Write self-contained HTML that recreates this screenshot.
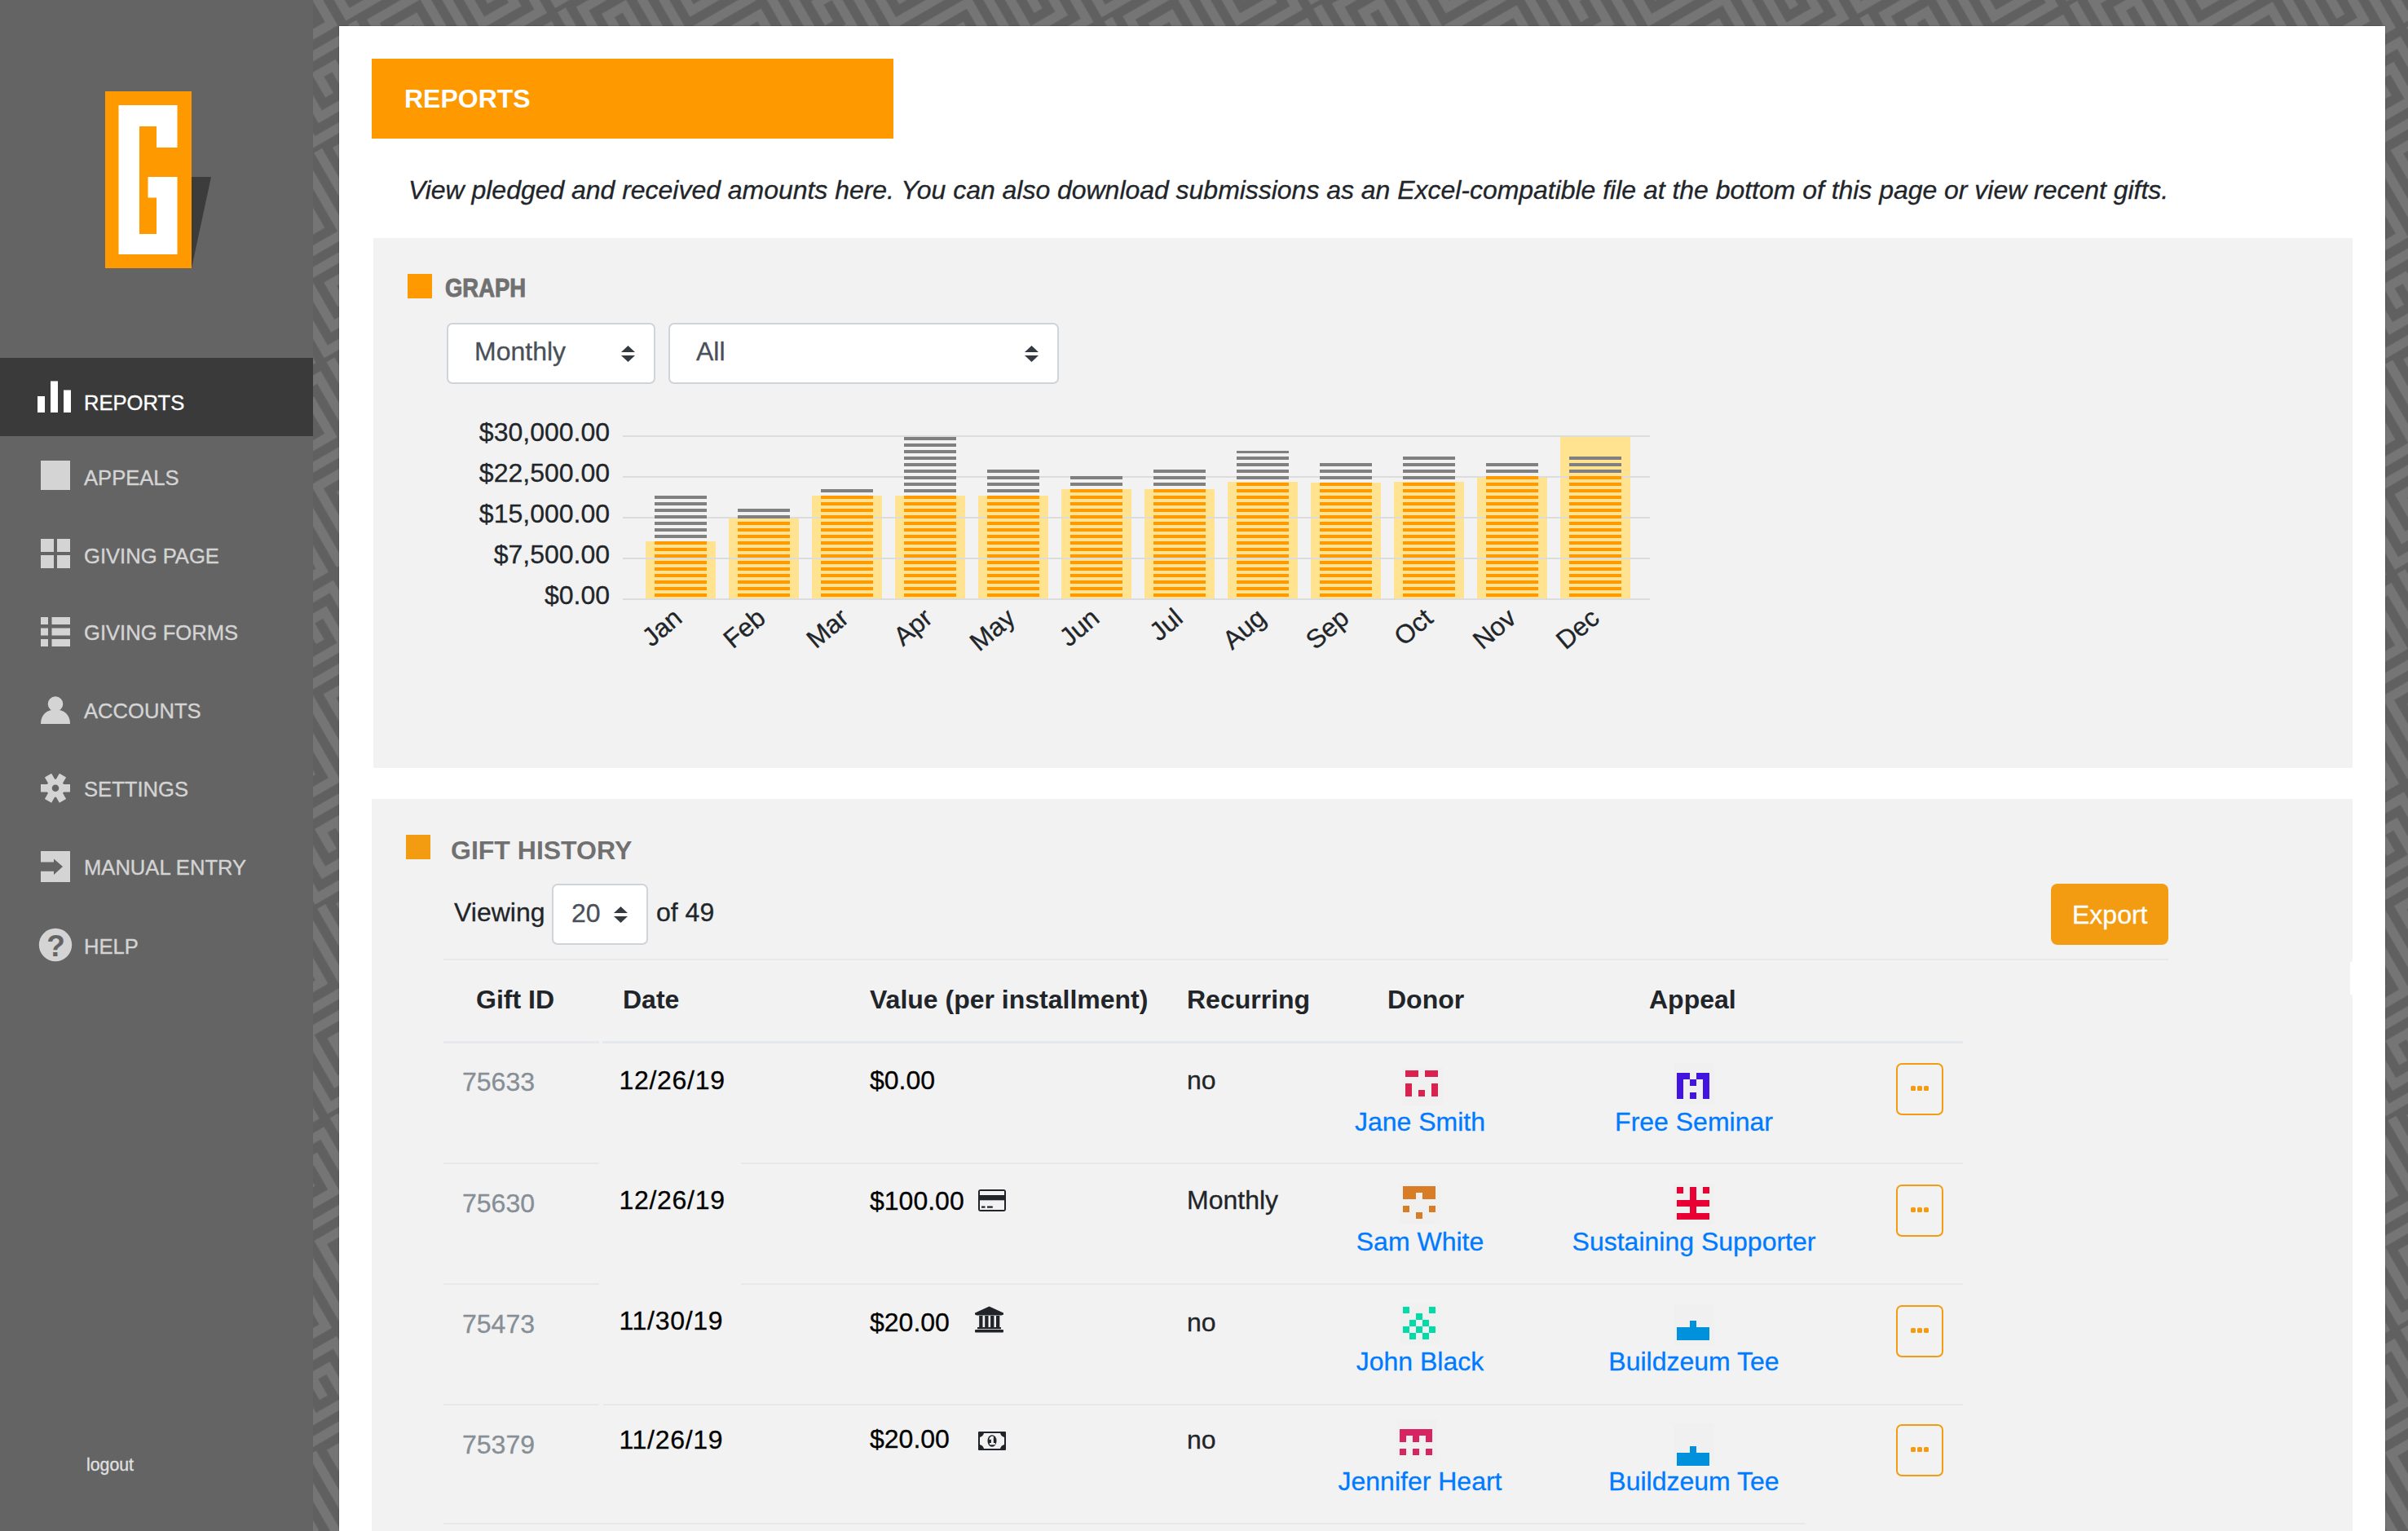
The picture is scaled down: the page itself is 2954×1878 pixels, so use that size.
<!DOCTYPE html><html><head><meta charset="utf-8"><title>Reports</title><style>
html,body{margin:0;padding:0;}
body{width:2954px;height:1878px;overflow:hidden;position:relative;font-family:"Liberation Sans", sans-serif;background:#636363;}
.t{position:absolute;white-space:nowrap;}
.r{position:absolute;}
svg{position:absolute;overflow:visible;}

</style></head><body>
<svg style="left:0;top:0" width="2954" height="1878" viewBox="0 0 2954 1878">
<defs>
<pattern id="mz" patternUnits="userSpaceOnUse" width="115" height="115" patternTransform="rotate(-30) translate(4 10)">
<rect width="115" height="115" fill="#606060"/>
<g fill="none" stroke="#757575" stroke-width="11.5" stroke-linecap="square">
<path d="M11.5 0 V103.5 H103.5 V11.5 H34.5 V80.5 H80.5 V34.5 H57.5 V57.5"/>
</g>
</pattern>
</defs>
<rect x="0" y="0" width="2954" height="1878" fill="url(#mz)"/>
</svg>
<div class="r" style="left:0px;top:0px;width:384px;height:1878px;background:#646464;"></div>
<svg style="left:0;top:0" width="384" height="400" viewBox="0 0 384 400">
<polygon points="235,217 259,217 235,329" fill="#3c3c3c"/>
<rect x="129" y="112" width="106" height="217" fill="#ff9900"/>
<rect x="145.5" y="129" width="72" height="183" fill="#ffffff"/>
<polygon points="171,155 192,155 192,181 235,181 235,217 181.5,217 181.5,242.5 192,242.5 192,287 171,287" fill="#ff9900"/>
</svg>
<div class="r" style="left:0px;top:439px;width:384px;height:96px;background:#3a3a3a;"></div>
<div class="t" style="left:103px;top:482.33px;font-size:25.6px;line-height:25.6px;color:#ffffff;font-weight:normal;font-style:normal;-webkit-text-stroke:0.35px #ffffff;">REPORTS</div>
<div class="t" style="left:103px;top:574.33px;font-size:25.6px;line-height:25.6px;color:#d4d4d4;font-weight:normal;font-style:normal;-webkit-text-stroke:0.35px #d4d4d4;">APPEALS</div>
<div class="t" style="left:103px;top:670.33px;font-size:25.6px;line-height:25.6px;color:#d4d4d4;font-weight:normal;font-style:normal;-webkit-text-stroke:0.35px #d4d4d4;">GIVING PAGE</div>
<div class="t" style="left:103px;top:764.33px;font-size:25.6px;line-height:25.6px;color:#d4d4d4;font-weight:normal;font-style:normal;-webkit-text-stroke:0.35px #d4d4d4;">GIVING FORMS</div>
<div class="t" style="left:103px;top:860.33px;font-size:25.6px;line-height:25.6px;color:#d4d4d4;font-weight:normal;font-style:normal;-webkit-text-stroke:0.35px #d4d4d4;">ACCOUNTS</div>
<div class="t" style="left:103px;top:956.33px;font-size:25.6px;line-height:25.6px;color:#d4d4d4;font-weight:normal;font-style:normal;-webkit-text-stroke:0.35px #d4d4d4;">SETTINGS</div>
<div class="t" style="left:103px;top:1052.33px;font-size:25.6px;line-height:25.6px;color:#d4d4d4;font-weight:normal;font-style:normal;-webkit-text-stroke:0.35px #d4d4d4;">MANUAL ENTRY</div>
<div class="t" style="left:103px;top:1149.33px;font-size:25.6px;line-height:25.6px;color:#d4d4d4;font-weight:normal;font-style:normal;-webkit-text-stroke:0.35px #d4d4d4;">HELP</div>
<svg style="left:0;top:0" width="384" height="1300" viewBox="0 0 384 1300">
<g fill="#ffffff">
<rect x="46" y="486" width="9" height="20"/>
<rect x="62" y="467.5" width="9" height="38.5"/>
<rect x="78" y="478.5" width="9" height="27.5"/>
</g>
<g fill="#d4d4d4">
<rect x="50" y="565" width="36" height="36"/>
<rect x="50" y="661" width="16" height="16"/><rect x="70" y="661" width="16" height="16"/>
<rect x="50" y="681" width="16" height="16"/><rect x="70" y="681" width="16" height="16"/>
<rect x="50" y="757" width="9" height="9"/><rect x="63.5" y="757" width="22.5" height="9"/>
<rect x="50" y="770.5" width="9" height="9"/><rect x="63.5" y="770.5" width="22.5" height="9"/>
<rect x="50" y="784" width="9" height="9"/><rect x="63.5" y="784" width="22.5" height="9"/>
<circle cx="68" cy="863.5" r="9.3"/>
<path d="M50 888 C50 876 58 870.5 68 870.5 C78 870.5 86 876 86 888 Z"/>
<path d="M60.5 1044 H86 V1082 H50 V1068.8 H66 V1073 L77 1063 L66 1053.4 V1057.4 H50 V1044 Z"/>
<circle cx="68" cy="1159" r="20.2"/>
</g>
<g transform="translate(68 966.8)" fill="#d4d4d4">
<circle r="11"/>
<rect x="-18" y="-4.75" width="36" height="9.5"/>
<rect x="-18" y="-4.75" width="36" height="9.5" transform="rotate(60)"/>
<rect x="-18" y="-4.75" width="36" height="9.5" transform="rotate(120)"/>
<circle r="4.3" fill="#646464"/>
</g>
<text x="68.5" y="1172.5" text-anchor="middle" font-family="Liberation Sans, sans-serif" font-weight="bold" font-size="37" fill="#646464">?</text>
</svg>
<div class="t" style="left:106px;top:1786.57px;font-size:21.3px;line-height:21.3px;color:#e0e0e0;font-weight:normal;font-style:normal;-webkit-text-stroke:0.3px #e0e0e0;">logout</div>
<div class="r" style="left:416px;top:32px;width:2510px;height:1846px;background:#ffffff;box-shadow:0 0 1.5px rgba(0,0,0,0.45);"></div>
<div class="r" style="left:456px;top:72px;width:640px;height:98px;background:#ff9900;"></div>
<div class="t" style="left:496px;top:104.91px;font-size:32px;line-height:32px;color:#ffffff;font-weight:bold;font-style:normal;">REPORTS</div>
<div class="t" style="left:501px;top:216.91px;font-size:32px;line-height:32px;color:#212529;font-weight:normal;font-style:italic;letter-spacing:-0.03px;-webkit-text-stroke:0.3px #212529;">View pledged and received amounts here. You can also download submissions as an Excel-compatible file at the bottom of this page or view recent gifts.</div>
<div class="r" style="left:458px;top:292px;width:2428px;height:650px;background:#f2f2f2;"></div>
<div class="r" style="left:500px;top:336px;width:30px;height:30px;background:#ff9900;"></div>
<div class="t" style="left:546px;top:338.18px;font-size:30.5px;line-height:30.5px;color:#707070;font-weight:bold;font-style:normal;transform:scaleX(0.9);transform-origin:0 0;-webkit-text-stroke:0.9px #707070;">GRAPH</div>
<div class="r" style="left:548px;top:396px;width:252px;height:71px;background:#fff;border:2px solid #ced4da;border-radius:7px;"></div>
<div class="t" style="left:582px;top:415.41px;font-size:32px;line-height:32px;color:#495057;font-weight:normal;font-style:normal;-webkit-text-stroke:0.3px #495057;">Monthly</div>
<svg style="left:762px;top:424px" width="17" height="20" viewBox="0 0 17 20"><path d="M8.5 0 L17 8 H0 Z M0 12 H17 L8.5 20 Z" fill="#343a40"/></svg>
<div class="r" style="left:820px;top:396px;width:475px;height:71px;background:#fff;border:2px solid #ced4da;border-radius:7px;"></div>
<div class="t" style="left:854px;top:415.41px;font-size:32px;line-height:32px;color:#495057;font-weight:normal;font-style:normal;-webkit-text-stroke:0.3px #495057;">All</div>
<svg style="left:1257px;top:424px" width="17" height="20" viewBox="0 0 17 20"><path d="M8.5 0 L17 8 H0 Z M0 12 H17 L8.5 20 Z" fill="#343a40"/></svg>
<div class="t" style="right:2206px;top:513.91px;font-size:32px;line-height:32px;color:#212529;font-weight:normal;font-style:normal;-webkit-text-stroke:0.3px #212529;">$30,000.00</div>
<div class="t" style="right:2206px;top:563.91px;font-size:32px;line-height:32px;color:#212529;font-weight:normal;font-style:normal;-webkit-text-stroke:0.3px #212529;">$22,500.00</div>
<div class="t" style="right:2206px;top:613.91px;font-size:32px;line-height:32px;color:#212529;font-weight:normal;font-style:normal;-webkit-text-stroke:0.3px #212529;">$15,000.00</div>
<div class="t" style="right:2206px;top:663.91px;font-size:32px;line-height:32px;color:#212529;font-weight:normal;font-style:normal;-webkit-text-stroke:0.3px #212529;">$7,500.00</div>
<div class="t" style="right:2206px;top:713.91px;font-size:32px;line-height:32px;color:#212529;font-weight:normal;font-style:normal;-webkit-text-stroke:0.3px #212529;">$0.00</div>
<svg style="left:0;top:0" width="2954" height="900" viewBox="0 0 2954 900">
<rect x="792" y="664" width="86" height="70" fill="#ffe391"/>
<rect x="894" y="636" width="86" height="98" fill="#ffe391"/>
<rect x="996" y="608" width="86" height="126" fill="#ffe391"/>
<rect x="1098" y="608" width="86" height="126" fill="#ffe391"/>
<rect x="1200" y="608" width="86" height="126" fill="#ffe391"/>
<rect x="1302" y="600" width="86" height="134" fill="#ffe391"/>
<rect x="1404" y="600" width="86" height="134" fill="#ffe391"/>
<rect x="1506" y="591" width="86" height="143" fill="#ffe391"/>
<rect x="1608" y="592" width="86" height="142" fill="#ffe391"/>
<rect x="1710" y="591" width="86" height="143" fill="#ffe391"/>
<rect x="1812" y="586" width="86" height="148" fill="#ffe391"/>
<rect x="1914" y="536" width="86" height="198" fill="#ffe391"/>
<rect x="764" y="534" width="1260" height="2" fill="#dcdcdc"/>
<rect x="764" y="584" width="1260" height="2" fill="#dcdcdc"/>
<rect x="764" y="634" width="1260" height="2" fill="#dcdcdc"/>
<rect x="764" y="684" width="1260" height="2" fill="#dcdcdc"/>
<rect x="764" y="734" width="1260" height="2" fill="#dcdcdc"/>
<rect x="803" y="608" width="64" height="4" fill="#808080"/>
<rect x="803" y="616" width="64" height="4" fill="#808080"/>
<rect x="803" y="624" width="64" height="4" fill="#808080"/>
<rect x="803" y="632" width="64" height="4" fill="#808080"/>
<rect x="803" y="640" width="64" height="4" fill="#808080"/>
<rect x="803" y="648" width="64" height="4" fill="#808080"/>
<rect x="803" y="656" width="64" height="4" fill="#808080"/>
<rect x="803" y="664" width="64" height="4" fill="#ff9900"/>
<rect x="803" y="672" width="64" height="4" fill="#ff9900"/>
<rect x="803" y="680" width="64" height="4" fill="#ff9900"/>
<rect x="803" y="688" width="64" height="4" fill="#ff9900"/>
<rect x="803" y="696" width="64" height="4" fill="#ff9900"/>
<rect x="803" y="704" width="64" height="4" fill="#ff9900"/>
<rect x="803" y="712" width="64" height="4" fill="#ff9900"/>
<rect x="803" y="720" width="64" height="4" fill="#ff9900"/>
<rect x="803" y="728" width="64" height="4" fill="#ff9900"/>
<rect x="905" y="624" width="64" height="4" fill="#808080"/>
<rect x="905" y="632" width="64" height="4" fill="#808080"/>
<rect x="905" y="640" width="64" height="4" fill="#ff9900"/>
<rect x="905" y="648" width="64" height="4" fill="#ff9900"/>
<rect x="905" y="656" width="64" height="4" fill="#ff9900"/>
<rect x="905" y="664" width="64" height="4" fill="#ff9900"/>
<rect x="905" y="672" width="64" height="4" fill="#ff9900"/>
<rect x="905" y="680" width="64" height="4" fill="#ff9900"/>
<rect x="905" y="688" width="64" height="4" fill="#ff9900"/>
<rect x="905" y="696" width="64" height="4" fill="#ff9900"/>
<rect x="905" y="704" width="64" height="4" fill="#ff9900"/>
<rect x="905" y="712" width="64" height="4" fill="#ff9900"/>
<rect x="905" y="720" width="64" height="4" fill="#ff9900"/>
<rect x="905" y="728" width="64" height="4" fill="#ff9900"/>
<rect x="1007" y="600" width="64" height="4" fill="#808080"/>
<rect x="1007" y="608" width="64" height="4" fill="#ff9900"/>
<rect x="1007" y="616" width="64" height="4" fill="#ff9900"/>
<rect x="1007" y="624" width="64" height="4" fill="#ff9900"/>
<rect x="1007" y="632" width="64" height="4" fill="#ff9900"/>
<rect x="1007" y="640" width="64" height="4" fill="#ff9900"/>
<rect x="1007" y="648" width="64" height="4" fill="#ff9900"/>
<rect x="1007" y="656" width="64" height="4" fill="#ff9900"/>
<rect x="1007" y="664" width="64" height="4" fill="#ff9900"/>
<rect x="1007" y="672" width="64" height="4" fill="#ff9900"/>
<rect x="1007" y="680" width="64" height="4" fill="#ff9900"/>
<rect x="1007" y="688" width="64" height="4" fill="#ff9900"/>
<rect x="1007" y="696" width="64" height="4" fill="#ff9900"/>
<rect x="1007" y="704" width="64" height="4" fill="#ff9900"/>
<rect x="1007" y="712" width="64" height="4" fill="#ff9900"/>
<rect x="1007" y="720" width="64" height="4" fill="#ff9900"/>
<rect x="1007" y="728" width="64" height="4" fill="#ff9900"/>
<rect x="1109" y="536" width="64" height="4" fill="#808080"/>
<rect x="1109" y="544" width="64" height="4" fill="#808080"/>
<rect x="1109" y="552" width="64" height="4" fill="#808080"/>
<rect x="1109" y="560" width="64" height="4" fill="#808080"/>
<rect x="1109" y="568" width="64" height="4" fill="#808080"/>
<rect x="1109" y="576" width="64" height="4" fill="#808080"/>
<rect x="1109" y="584" width="64" height="4" fill="#808080"/>
<rect x="1109" y="592" width="64" height="4" fill="#808080"/>
<rect x="1109" y="600" width="64" height="4" fill="#808080"/>
<rect x="1109" y="608" width="64" height="4" fill="#ff9900"/>
<rect x="1109" y="616" width="64" height="4" fill="#ff9900"/>
<rect x="1109" y="624" width="64" height="4" fill="#ff9900"/>
<rect x="1109" y="632" width="64" height="4" fill="#ff9900"/>
<rect x="1109" y="640" width="64" height="4" fill="#ff9900"/>
<rect x="1109" y="648" width="64" height="4" fill="#ff9900"/>
<rect x="1109" y="656" width="64" height="4" fill="#ff9900"/>
<rect x="1109" y="664" width="64" height="4" fill="#ff9900"/>
<rect x="1109" y="672" width="64" height="4" fill="#ff9900"/>
<rect x="1109" y="680" width="64" height="4" fill="#ff9900"/>
<rect x="1109" y="688" width="64" height="4" fill="#ff9900"/>
<rect x="1109" y="696" width="64" height="4" fill="#ff9900"/>
<rect x="1109" y="704" width="64" height="4" fill="#ff9900"/>
<rect x="1109" y="712" width="64" height="4" fill="#ff9900"/>
<rect x="1109" y="720" width="64" height="4" fill="#ff9900"/>
<rect x="1109" y="728" width="64" height="4" fill="#ff9900"/>
<rect x="1211" y="576" width="64" height="4" fill="#808080"/>
<rect x="1211" y="584" width="64" height="4" fill="#808080"/>
<rect x="1211" y="592" width="64" height="4" fill="#808080"/>
<rect x="1211" y="600" width="64" height="4" fill="#808080"/>
<rect x="1211" y="608" width="64" height="4" fill="#ff9900"/>
<rect x="1211" y="616" width="64" height="4" fill="#ff9900"/>
<rect x="1211" y="624" width="64" height="4" fill="#ff9900"/>
<rect x="1211" y="632" width="64" height="4" fill="#ff9900"/>
<rect x="1211" y="640" width="64" height="4" fill="#ff9900"/>
<rect x="1211" y="648" width="64" height="4" fill="#ff9900"/>
<rect x="1211" y="656" width="64" height="4" fill="#ff9900"/>
<rect x="1211" y="664" width="64" height="4" fill="#ff9900"/>
<rect x="1211" y="672" width="64" height="4" fill="#ff9900"/>
<rect x="1211" y="680" width="64" height="4" fill="#ff9900"/>
<rect x="1211" y="688" width="64" height="4" fill="#ff9900"/>
<rect x="1211" y="696" width="64" height="4" fill="#ff9900"/>
<rect x="1211" y="704" width="64" height="4" fill="#ff9900"/>
<rect x="1211" y="712" width="64" height="4" fill="#ff9900"/>
<rect x="1211" y="720" width="64" height="4" fill="#ff9900"/>
<rect x="1211" y="728" width="64" height="4" fill="#ff9900"/>
<rect x="1313" y="584" width="64" height="4" fill="#808080"/>
<rect x="1313" y="592" width="64" height="4" fill="#808080"/>
<rect x="1313" y="600" width="64" height="4" fill="#ff9900"/>
<rect x="1313" y="608" width="64" height="4" fill="#ff9900"/>
<rect x="1313" y="616" width="64" height="4" fill="#ff9900"/>
<rect x="1313" y="624" width="64" height="4" fill="#ff9900"/>
<rect x="1313" y="632" width="64" height="4" fill="#ff9900"/>
<rect x="1313" y="640" width="64" height="4" fill="#ff9900"/>
<rect x="1313" y="648" width="64" height="4" fill="#ff9900"/>
<rect x="1313" y="656" width="64" height="4" fill="#ff9900"/>
<rect x="1313" y="664" width="64" height="4" fill="#ff9900"/>
<rect x="1313" y="672" width="64" height="4" fill="#ff9900"/>
<rect x="1313" y="680" width="64" height="4" fill="#ff9900"/>
<rect x="1313" y="688" width="64" height="4" fill="#ff9900"/>
<rect x="1313" y="696" width="64" height="4" fill="#ff9900"/>
<rect x="1313" y="704" width="64" height="4" fill="#ff9900"/>
<rect x="1313" y="712" width="64" height="4" fill="#ff9900"/>
<rect x="1313" y="720" width="64" height="4" fill="#ff9900"/>
<rect x="1313" y="728" width="64" height="4" fill="#ff9900"/>
<rect x="1415" y="576" width="64" height="4" fill="#808080"/>
<rect x="1415" y="584" width="64" height="4" fill="#808080"/>
<rect x="1415" y="592" width="64" height="4" fill="#808080"/>
<rect x="1415" y="600" width="64" height="4" fill="#ff9900"/>
<rect x="1415" y="608" width="64" height="4" fill="#ff9900"/>
<rect x="1415" y="616" width="64" height="4" fill="#ff9900"/>
<rect x="1415" y="624" width="64" height="4" fill="#ff9900"/>
<rect x="1415" y="632" width="64" height="4" fill="#ff9900"/>
<rect x="1415" y="640" width="64" height="4" fill="#ff9900"/>
<rect x="1415" y="648" width="64" height="4" fill="#ff9900"/>
<rect x="1415" y="656" width="64" height="4" fill="#ff9900"/>
<rect x="1415" y="664" width="64" height="4" fill="#ff9900"/>
<rect x="1415" y="672" width="64" height="4" fill="#ff9900"/>
<rect x="1415" y="680" width="64" height="4" fill="#ff9900"/>
<rect x="1415" y="688" width="64" height="4" fill="#ff9900"/>
<rect x="1415" y="696" width="64" height="4" fill="#ff9900"/>
<rect x="1415" y="704" width="64" height="4" fill="#ff9900"/>
<rect x="1415" y="712" width="64" height="4" fill="#ff9900"/>
<rect x="1415" y="720" width="64" height="4" fill="#ff9900"/>
<rect x="1415" y="728" width="64" height="4" fill="#ff9900"/>
<rect x="1517" y="553" width="64" height="3" fill="#808080"/>
<rect x="1517" y="560" width="64" height="4" fill="#808080"/>
<rect x="1517" y="568" width="64" height="4" fill="#808080"/>
<rect x="1517" y="576" width="64" height="4" fill="#808080"/>
<rect x="1517" y="584" width="64" height="4" fill="#808080"/>
<rect x="1517" y="592" width="64" height="4" fill="#ff9900"/>
<rect x="1517" y="600" width="64" height="4" fill="#ff9900"/>
<rect x="1517" y="608" width="64" height="4" fill="#ff9900"/>
<rect x="1517" y="616" width="64" height="4" fill="#ff9900"/>
<rect x="1517" y="624" width="64" height="4" fill="#ff9900"/>
<rect x="1517" y="632" width="64" height="4" fill="#ff9900"/>
<rect x="1517" y="640" width="64" height="4" fill="#ff9900"/>
<rect x="1517" y="648" width="64" height="4" fill="#ff9900"/>
<rect x="1517" y="656" width="64" height="4" fill="#ff9900"/>
<rect x="1517" y="664" width="64" height="4" fill="#ff9900"/>
<rect x="1517" y="672" width="64" height="4" fill="#ff9900"/>
<rect x="1517" y="680" width="64" height="4" fill="#ff9900"/>
<rect x="1517" y="688" width="64" height="4" fill="#ff9900"/>
<rect x="1517" y="696" width="64" height="4" fill="#ff9900"/>
<rect x="1517" y="704" width="64" height="4" fill="#ff9900"/>
<rect x="1517" y="712" width="64" height="4" fill="#ff9900"/>
<rect x="1517" y="720" width="64" height="4" fill="#ff9900"/>
<rect x="1517" y="728" width="64" height="4" fill="#ff9900"/>
<rect x="1619" y="568" width="64" height="4" fill="#808080"/>
<rect x="1619" y="576" width="64" height="4" fill="#808080"/>
<rect x="1619" y="584" width="64" height="4" fill="#808080"/>
<rect x="1619" y="592" width="64" height="4" fill="#ff9900"/>
<rect x="1619" y="600" width="64" height="4" fill="#ff9900"/>
<rect x="1619" y="608" width="64" height="4" fill="#ff9900"/>
<rect x="1619" y="616" width="64" height="4" fill="#ff9900"/>
<rect x="1619" y="624" width="64" height="4" fill="#ff9900"/>
<rect x="1619" y="632" width="64" height="4" fill="#ff9900"/>
<rect x="1619" y="640" width="64" height="4" fill="#ff9900"/>
<rect x="1619" y="648" width="64" height="4" fill="#ff9900"/>
<rect x="1619" y="656" width="64" height="4" fill="#ff9900"/>
<rect x="1619" y="664" width="64" height="4" fill="#ff9900"/>
<rect x="1619" y="672" width="64" height="4" fill="#ff9900"/>
<rect x="1619" y="680" width="64" height="4" fill="#ff9900"/>
<rect x="1619" y="688" width="64" height="4" fill="#ff9900"/>
<rect x="1619" y="696" width="64" height="4" fill="#ff9900"/>
<rect x="1619" y="704" width="64" height="4" fill="#ff9900"/>
<rect x="1619" y="712" width="64" height="4" fill="#ff9900"/>
<rect x="1619" y="720" width="64" height="4" fill="#ff9900"/>
<rect x="1619" y="728" width="64" height="4" fill="#ff9900"/>
<rect x="1721" y="560" width="64" height="4" fill="#808080"/>
<rect x="1721" y="568" width="64" height="4" fill="#808080"/>
<rect x="1721" y="576" width="64" height="4" fill="#808080"/>
<rect x="1721" y="584" width="64" height="4" fill="#808080"/>
<rect x="1721" y="592" width="64" height="4" fill="#ff9900"/>
<rect x="1721" y="600" width="64" height="4" fill="#ff9900"/>
<rect x="1721" y="608" width="64" height="4" fill="#ff9900"/>
<rect x="1721" y="616" width="64" height="4" fill="#ff9900"/>
<rect x="1721" y="624" width="64" height="4" fill="#ff9900"/>
<rect x="1721" y="632" width="64" height="4" fill="#ff9900"/>
<rect x="1721" y="640" width="64" height="4" fill="#ff9900"/>
<rect x="1721" y="648" width="64" height="4" fill="#ff9900"/>
<rect x="1721" y="656" width="64" height="4" fill="#ff9900"/>
<rect x="1721" y="664" width="64" height="4" fill="#ff9900"/>
<rect x="1721" y="672" width="64" height="4" fill="#ff9900"/>
<rect x="1721" y="680" width="64" height="4" fill="#ff9900"/>
<rect x="1721" y="688" width="64" height="4" fill="#ff9900"/>
<rect x="1721" y="696" width="64" height="4" fill="#ff9900"/>
<rect x="1721" y="704" width="64" height="4" fill="#ff9900"/>
<rect x="1721" y="712" width="64" height="4" fill="#ff9900"/>
<rect x="1721" y="720" width="64" height="4" fill="#ff9900"/>
<rect x="1721" y="728" width="64" height="4" fill="#ff9900"/>
<rect x="1823" y="568" width="64" height="4" fill="#808080"/>
<rect x="1823" y="576" width="64" height="4" fill="#808080"/>
<rect x="1823" y="584" width="64" height="4" fill="#ff9900"/>
<rect x="1823" y="592" width="64" height="4" fill="#ff9900"/>
<rect x="1823" y="600" width="64" height="4" fill="#ff9900"/>
<rect x="1823" y="608" width="64" height="4" fill="#ff9900"/>
<rect x="1823" y="616" width="64" height="4" fill="#ff9900"/>
<rect x="1823" y="624" width="64" height="4" fill="#ff9900"/>
<rect x="1823" y="632" width="64" height="4" fill="#ff9900"/>
<rect x="1823" y="640" width="64" height="4" fill="#ff9900"/>
<rect x="1823" y="648" width="64" height="4" fill="#ff9900"/>
<rect x="1823" y="656" width="64" height="4" fill="#ff9900"/>
<rect x="1823" y="664" width="64" height="4" fill="#ff9900"/>
<rect x="1823" y="672" width="64" height="4" fill="#ff9900"/>
<rect x="1823" y="680" width="64" height="4" fill="#ff9900"/>
<rect x="1823" y="688" width="64" height="4" fill="#ff9900"/>
<rect x="1823" y="696" width="64" height="4" fill="#ff9900"/>
<rect x="1823" y="704" width="64" height="4" fill="#ff9900"/>
<rect x="1823" y="712" width="64" height="4" fill="#ff9900"/>
<rect x="1823" y="720" width="64" height="4" fill="#ff9900"/>
<rect x="1823" y="728" width="64" height="4" fill="#ff9900"/>
<rect x="1925" y="560" width="64" height="4" fill="#808080"/>
<rect x="1925" y="568" width="64" height="4" fill="#808080"/>
<rect x="1925" y="576" width="64" height="4" fill="#808080"/>
<rect x="1925" y="584" width="64" height="4" fill="#ff9900"/>
<rect x="1925" y="592" width="64" height="4" fill="#ff9900"/>
<rect x="1925" y="600" width="64" height="4" fill="#ff9900"/>
<rect x="1925" y="608" width="64" height="4" fill="#ff9900"/>
<rect x="1925" y="616" width="64" height="4" fill="#ff9900"/>
<rect x="1925" y="624" width="64" height="4" fill="#ff9900"/>
<rect x="1925" y="632" width="64" height="4" fill="#ff9900"/>
<rect x="1925" y="640" width="64" height="4" fill="#ff9900"/>
<rect x="1925" y="648" width="64" height="4" fill="#ff9900"/>
<rect x="1925" y="656" width="64" height="4" fill="#ff9900"/>
<rect x="1925" y="664" width="64" height="4" fill="#ff9900"/>
<rect x="1925" y="672" width="64" height="4" fill="#ff9900"/>
<rect x="1925" y="680" width="64" height="4" fill="#ff9900"/>
<rect x="1925" y="688" width="64" height="4" fill="#ff9900"/>
<rect x="1925" y="696" width="64" height="4" fill="#ff9900"/>
<rect x="1925" y="704" width="64" height="4" fill="#ff9900"/>
<rect x="1925" y="712" width="64" height="4" fill="#ff9900"/>
<rect x="1925" y="720" width="64" height="4" fill="#ff9900"/>
<rect x="1925" y="728" width="64" height="4" fill="#ff9900"/>
</svg>
<div class="r" style="left:831.7px;top:753px;width:0;height:0;"><div class="t" style="right:0;top:-16px;font-size:32px;line-height:32px;color:#212529;transform-origin:100% 50%;transform:rotate(-40deg);-webkit-text-stroke:0.3px #212529;">Jan</div></div>
<div class="r" style="left:934.0px;top:753px;width:0;height:0;"><div class="t" style="right:0;top:-16px;font-size:32px;line-height:32px;color:#212529;transform-origin:100% 50%;transform:rotate(-40deg);-webkit-text-stroke:0.3px #212529;">Feb</div></div>
<div class="r" style="left:1036.3px;top:753px;width:0;height:0;"><div class="t" style="right:0;top:-16px;font-size:32px;line-height:32px;color:#212529;transform-origin:100% 50%;transform:rotate(-40deg);-webkit-text-stroke:0.3px #212529;">Mar</div></div>
<div class="r" style="left:1138.6px;top:753px;width:0;height:0;"><div class="t" style="right:0;top:-16px;font-size:32px;line-height:32px;color:#212529;transform-origin:100% 50%;transform:rotate(-40deg);-webkit-text-stroke:0.3px #212529;">Apr</div></div>
<div class="r" style="left:1240.9px;top:753px;width:0;height:0;"><div class="t" style="right:0;top:-16px;font-size:32px;line-height:32px;color:#212529;transform-origin:100% 50%;transform:rotate(-40deg);-webkit-text-stroke:0.3px #212529;">May</div></div>
<div class="r" style="left:1343.2px;top:753px;width:0;height:0;"><div class="t" style="right:0;top:-16px;font-size:32px;line-height:32px;color:#212529;transform-origin:100% 50%;transform:rotate(-40deg);-webkit-text-stroke:0.3px #212529;">Jun</div></div>
<div class="r" style="left:1445.5px;top:753px;width:0;height:0;"><div class="t" style="right:0;top:-16px;font-size:32px;line-height:32px;color:#212529;transform-origin:100% 50%;transform:rotate(-40deg);-webkit-text-stroke:0.3px #212529;">Jul</div></div>
<div class="r" style="left:1547.8000000000002px;top:753px;width:0;height:0;"><div class="t" style="right:0;top:-16px;font-size:32px;line-height:32px;color:#212529;transform-origin:100% 50%;transform:rotate(-40deg);-webkit-text-stroke:0.3px #212529;">Aug</div></div>
<div class="r" style="left:1650.1px;top:753px;width:0;height:0;"><div class="t" style="right:0;top:-16px;font-size:32px;line-height:32px;color:#212529;transform-origin:100% 50%;transform:rotate(-40deg);-webkit-text-stroke:0.3px #212529;">Sep</div></div>
<div class="r" style="left:1752.4px;top:753px;width:0;height:0;"><div class="t" style="right:0;top:-16px;font-size:32px;line-height:32px;color:#212529;transform-origin:100% 50%;transform:rotate(-40deg);-webkit-text-stroke:0.3px #212529;">Oct</div></div>
<div class="r" style="left:1854.7px;top:753px;width:0;height:0;"><div class="t" style="right:0;top:-16px;font-size:32px;line-height:32px;color:#212529;transform-origin:100% 50%;transform:rotate(-40deg);-webkit-text-stroke:0.3px #212529;">Nov</div></div>
<div class="r" style="left:1957.0px;top:753px;width:0;height:0;"><div class="t" style="right:0;top:-16px;font-size:32px;line-height:32px;color:#212529;transform-origin:100% 50%;transform:rotate(-40deg);-webkit-text-stroke:0.3px #212529;">Dec</div></div>
<div class="r" style="left:456px;top:980px;width:2430px;height:898px;background:#f2f2f2;"></div>
<div class="r" style="left:2883px;top:1180px;width:3px;height:40px;background:#ffffff;"></div>
<div class="r" style="left:498px;top:1024px;width:30px;height:30px;background:#f39c12;"></div>
<div class="t" style="left:553px;top:1027.41px;font-size:32px;line-height:32px;color:#707070;font-weight:bold;font-style:normal;">GIFT HISTORY</div>
<div class="t" style="left:557px;top:1103.41px;font-size:32px;line-height:32px;color:#212529;font-weight:normal;font-style:normal;-webkit-text-stroke:0.3px #212529;">Viewing</div>
<div class="r" style="left:677px;top:1084px;width:114px;height:71px;background:#fff;border:2px solid #ced4da;border-radius:7px;"></div>
<div class="t" style="left:701px;top:1103.91px;font-size:32px;line-height:32px;color:#495057;font-weight:normal;font-style:normal;-webkit-text-stroke:0.3px #495057;">20</div>
<svg style="left:753px;top:1112px" width="17" height="20" viewBox="0 0 17 20"><path d="M8.5 0 L17 8 H0 Z M0 12 H17 L8.5 20 Z" fill="#343a40"/></svg>
<div class="t" style="left:805px;top:1103.41px;font-size:32px;line-height:32px;color:#212529;font-weight:normal;font-style:normal;-webkit-text-stroke:0.3px #212529;">of 49</div>
<div class="r" style="left:2516px;top:1084px;width:144px;height:75px;background:#f39c12;border-radius:8px;"></div>
<div class="t" style="left:2542px;top:1105.91px;font-size:32px;line-height:32px;color:#ffffff;font-weight:normal;font-style:normal;-webkit-text-stroke:0.3px #ffffff;">Export</div>
<div class="r" style="left:544px;top:1176px;width:2116px;height:2px;background:#e6e8eb;"></div>
<div class="r" style="left:544px;top:1276.5px;width:191px;height:3.5px;background:#e6e8eb;"></div>
<div class="r" style="left:739px;top:1276.5px;width:1669px;height:3.5px;background:#e4e7eb;"></div>
<div class="r" style="left:544px;top:1426px;width:191px;height:2px;background:#e6e8eb;"></div>
<div class="r" style="left:909px;top:1426px;width:1499px;height:2px;background:#e6e8eb;"></div>
<div class="r" style="left:544px;top:1574px;width:191px;height:2px;background:#e6e8eb;"></div>
<div class="r" style="left:909px;top:1574px;width:1499px;height:2px;background:#e6e8eb;"></div>
<div class="r" style="left:544px;top:1722px;width:191px;height:2px;background:#e6e8eb;"></div>
<div class="r" style="left:740px;top:1722px;width:1668px;height:2px;background:#e6e8eb;"></div>
<div class="r" style="left:544px;top:1868px;width:1671px;height:2px;background:#e6e8eb;"></div>
<div class="t" style="left:584px;top:1210.41px;font-size:32px;line-height:32px;color:#212529;font-weight:bold;font-style:normal;">Gift ID</div>
<div class="t" style="left:764px;top:1210.41px;font-size:32px;line-height:32px;color:#212529;font-weight:bold;font-style:normal;">Date</div>
<div class="t" style="left:1067px;top:1210.41px;font-size:32px;line-height:32px;color:#212529;font-weight:bold;font-style:normal;">Value (per installment)</div>
<div class="t" style="left:1456px;top:1210.41px;font-size:32px;line-height:32px;color:#212529;font-weight:bold;font-style:normal;">Recurring</div>
<div class="t" style="left:1702px;top:1210.41px;font-size:32px;line-height:32px;color:#212529;font-weight:bold;font-style:normal;">Donor</div>
<div class="t" style="left:2023px;top:1210.41px;font-size:32px;line-height:32px;color:#212529;font-weight:bold;font-style:normal;">Appeal</div>
<div class="t" style="left:567px;top:1310.91px;font-size:32px;line-height:32px;color:#868e96;font-weight:normal;font-style:normal;-webkit-text-stroke:0.3px #868e96;">75633</div>
<div class="t" style="left:759.5px;top:1308.91px;font-size:32px;line-height:32px;color:#000000;font-weight:normal;font-style:normal;letter-spacing:0.7px;-webkit-text-stroke:0.3px #000;">12/26/19</div>
<div class="t" style="left:1067px;top:1308.91px;font-size:32px;line-height:32px;color:#000000;font-weight:normal;font-style:normal;-webkit-text-stroke:0.3px #000;">$0.00</div>
<div class="t" style="left:1456px;top:1308.91px;font-size:32px;line-height:32px;color:#212529;font-weight:normal;font-style:normal;-webkit-text-stroke:0.3px #212529;">no</div>
<div class="t" style="left:742px;width:2000px;text-align:center;top:1359.91px;font-size:32px;line-height:32px;color:#007bff;font-weight:normal;font-style:normal;-webkit-text-stroke:0.3px #007bff;">Jane Smith</div>
<div class="t" style="left:1078px;width:2000px;text-align:center;top:1359.91px;font-size:32px;line-height:32px;color:#007bff;font-weight:normal;font-style:normal;-webkit-text-stroke:0.3px #007bff;">Free Seminar</div>
<div class="r" style="left:2326px;top:1304px;width:54px;height:60px;border:2px solid #f39c12;border-radius:7px;"></div>
<svg style="left:2344px;top:1332px" width="22" height="6" viewBox="0 0 22 6"><g fill="#f39c12"><rect x="0" width="6" height="6" rx="1.5"/><rect x="8" width="6" height="6" rx="1.5"/><rect x="16" width="6" height="6" rx="1.5"/></g></svg>
<div class="t" style="left:567px;top:1459.61px;font-size:32px;line-height:32px;color:#868e96;font-weight:normal;font-style:normal;-webkit-text-stroke:0.3px #868e96;">75630</div>
<div class="t" style="left:759.5px;top:1456.11px;font-size:32px;line-height:32px;color:#000000;font-weight:normal;font-style:normal;letter-spacing:0.7px;-webkit-text-stroke:0.3px #000;">12/26/19</div>
<div class="t" style="left:1067px;top:1456.61px;font-size:32px;line-height:32px;color:#000000;font-weight:normal;font-style:normal;-webkit-text-stroke:0.3px #000;">$100.00</div>
<div class="t" style="left:1456px;top:1456.11px;font-size:32px;line-height:32px;color:#212529;font-weight:normal;font-style:normal;-webkit-text-stroke:0.3px #212529;">Monthly</div>
<div class="t" style="left:742px;width:2000px;text-align:center;top:1506.91px;font-size:32px;line-height:32px;color:#007bff;font-weight:normal;font-style:normal;-webkit-text-stroke:0.3px #007bff;">Sam White</div>
<div class="t" style="left:1078px;width:2000px;text-align:center;top:1506.91px;font-size:32px;line-height:32px;color:#007bff;font-weight:normal;font-style:normal;-webkit-text-stroke:0.3px #007bff;">Sustaining Supporter</div>
<div class="r" style="left:2326px;top:1452.5px;width:54px;height:60px;border:2px solid #f39c12;border-radius:7px;"></div>
<svg style="left:2344px;top:1480.5px" width="22" height="6" viewBox="0 0 22 6"><g fill="#f39c12"><rect x="0" width="6" height="6" rx="1.5"/><rect x="8" width="6" height="6" rx="1.5"/><rect x="16" width="6" height="6" rx="1.5"/></g></svg>
<div class="t" style="left:567px;top:1607.91px;font-size:32px;line-height:32px;color:#868e96;font-weight:normal;font-style:normal;-webkit-text-stroke:0.3px #868e96;">75473</div>
<div class="t" style="left:759.5px;top:1603.91px;font-size:32px;line-height:32px;color:#000000;font-weight:normal;font-style:normal;letter-spacing:0.7px;-webkit-text-stroke:0.3px #000;">11/30/19</div>
<div class="t" style="left:1067px;top:1605.91px;font-size:32px;line-height:32px;color:#000000;font-weight:normal;font-style:normal;-webkit-text-stroke:0.3px #000;">$20.00</div>
<div class="t" style="left:1456px;top:1605.91px;font-size:32px;line-height:32px;color:#212529;font-weight:normal;font-style:normal;-webkit-text-stroke:0.3px #212529;">no</div>
<div class="t" style="left:742px;width:2000px;text-align:center;top:1654.41px;font-size:32px;line-height:32px;color:#007bff;font-weight:normal;font-style:normal;-webkit-text-stroke:0.3px #007bff;">John Black</div>
<div class="t" style="left:1078px;width:2000px;text-align:center;top:1654.41px;font-size:32px;line-height:32px;color:#007bff;font-weight:normal;font-style:normal;-webkit-text-stroke:0.3px #007bff;">Buildzeum Tee</div>
<div class="r" style="left:2326px;top:1600.5px;width:54px;height:60px;border:2px solid #f39c12;border-radius:7px;"></div>
<svg style="left:2344px;top:1628.5px" width="22" height="6" viewBox="0 0 22 6"><g fill="#f39c12"><rect x="0" width="6" height="6" rx="1.5"/><rect x="8" width="6" height="6" rx="1.5"/><rect x="16" width="6" height="6" rx="1.5"/></g></svg>
<div class="t" style="left:567px;top:1755.91px;font-size:32px;line-height:32px;color:#868e96;font-weight:normal;font-style:normal;-webkit-text-stroke:0.3px #868e96;">75379</div>
<div class="t" style="left:759.5px;top:1749.91px;font-size:32px;line-height:32px;color:#000000;font-weight:normal;font-style:normal;letter-spacing:0.7px;-webkit-text-stroke:0.3px #000;">11/26/19</div>
<div class="t" style="left:1067px;top:1749.41px;font-size:32px;line-height:32px;color:#000000;font-weight:normal;font-style:normal;-webkit-text-stroke:0.3px #000;">$20.00</div>
<div class="t" style="left:1456px;top:1749.91px;font-size:32px;line-height:32px;color:#212529;font-weight:normal;font-style:normal;-webkit-text-stroke:0.3px #212529;">no</div>
<div class="t" style="left:742px;width:2000px;text-align:center;top:1800.91px;font-size:32px;line-height:32px;color:#007bff;font-weight:normal;font-style:normal;-webkit-text-stroke:0.3px #007bff;">Jennifer Heart</div>
<div class="t" style="left:1078px;width:2000px;text-align:center;top:1800.91px;font-size:32px;line-height:32px;color:#007bff;font-weight:normal;font-style:normal;-webkit-text-stroke:0.3px #007bff;">Buildzeum Tee</div>
<div class="r" style="left:2326px;top:1746.5px;width:54px;height:60px;border:2px solid #f39c12;border-radius:7px;"></div>
<svg style="left:2344px;top:1774.5px" width="22" height="6" viewBox="0 0 22 6"><g fill="#f39c12"><rect x="0" width="6" height="6" rx="1.5"/><rect x="8" width="6" height="6" rx="1.5"/><rect x="16" width="6" height="6" rx="1.5"/></g></svg>
<svg style="left:0;top:0" width="2954" height="1878" viewBox="0 0 2954 1878">
<g fill="#212529">
<path fill-rule="evenodd" d="M1203 1459 H1231 Q1234 1459 1234 1462 V1483 Q1234 1486 1231 1486 H1203 Q1200 1486 1200 1483 V1462 Q1200 1459 1203 1459 Z M1202 1461 V1484 H1232 V1461 Z"/>
<rect x="1201" y="1466" width="32" height="6.3"/>
<rect x="1204" y="1479.5" width="4.5" height="2.2"/><rect x="1211" y="1479.5" width="6.8" height="2.2"/>
<polygon points="1213.5,1602.5 1231,1610.5 1231,1612.5 1228.5,1613.5 1198.5,1613.5 1196,1612.5 1196,1610.5"/>
<rect x="1201.2" y="1614" width="4.3" height="14.5"/><rect x="1208.2" y="1614" width="4.3" height="14.5"/>
<rect x="1215.1" y="1614" width="4.3" height="14.5"/><rect x="1222" y="1614" width="4.3" height="14.5"/>
<rect x="1199" y="1628" width="29" height="2.2"/>
<rect x="1196" y="1631" width="35" height="3.5" rx="1"/>
<path fill-rule="evenodd" d="M1201 1756 H1233 Q1234 1756 1234 1757 V1778 Q1234 1779 1233 1779 H1201 Q1200 1779 1200 1778 V1757 Q1200 1756 1201 1756 Z M1207 1758 H1227 Q1228 1762 1232 1763 V1772 Q1228 1773 1227 1777 H1207 Q1206 1773 1202 1772 V1763 Q1206 1762 1207 1758 Z"/>
<ellipse cx="1217" cy="1767.5" rx="5.5" ry="7.3"/>
</g>
<path d="M1215.9 1761.8 H1218.8 V1770 H1220.8 V1772.3 H1213.9 V1770 H1215.9 V1765.6 L1213.7 1766.2 V1763.9 Z" fill="#f2f2f2"/>
</svg>
<svg style="left:0;top:0" width="2954" height="1878" viewBox="0 0 2954 1878"><rect x="1720" y="1309" width="50" height="47" fill="#f0f0f0"/><rect x="1724" y="1313" width="8" height="8" fill="#d9224f"/><rect x="1732" y="1313" width="8" height="8" fill="#d9224f"/><rect x="1748" y="1313" width="8" height="8" fill="#d9224f"/><rect x="1756" y="1313" width="8" height="8" fill="#d9224f"/><rect x="1724" y="1329" width="8" height="8" fill="#d9224f"/><rect x="1756" y="1329" width="8" height="8" fill="#d9224f"/><rect x="1724" y="1337" width="8" height="8" fill="#d9224f"/><rect x="1740" y="1337" width="8" height="8" fill="#d9224f"/><rect x="1756" y="1337" width="8" height="8" fill="#d9224f"/><rect x="2053" y="1304" width="50" height="50" fill="#f0f0f0"/><rect x="2057" y="1316" width="8" height="8" fill="#4314e0"/><rect x="2065" y="1316" width="8" height="8" fill="#4314e0"/><rect x="2081" y="1316" width="8" height="8" fill="#4314e0"/><rect x="2089" y="1316" width="8" height="8" fill="#4314e0"/><rect x="2057" y="1324" width="8" height="8" fill="#4314e0"/><rect x="2073" y="1324" width="8" height="8" fill="#4314e0"/><rect x="2089" y="1324" width="8" height="8" fill="#4314e0"/><rect x="2057" y="1332" width="8" height="8" fill="#4314e0"/><rect x="2089" y="1332" width="8" height="8" fill="#4314e0"/><rect x="2057" y="1340" width="8" height="8" fill="#4314e0"/><rect x="2073" y="1340" width="8" height="8" fill="#4314e0"/><rect x="2089" y="1340" width="8" height="8" fill="#4314e0"/><rect x="1717" y="1451" width="50" height="50" fill="#f0f0f0"/><rect x="1721" y="1455" width="8" height="8" fill="#d87c25"/><rect x="1729" y="1455" width="8" height="8" fill="#d87c25"/><rect x="1737" y="1455" width="8" height="8" fill="#d87c25"/><rect x="1745" y="1455" width="8" height="8" fill="#d87c25"/><rect x="1753" y="1455" width="8" height="8" fill="#d87c25"/><rect x="1721" y="1463" width="8" height="8" fill="#d87c25"/><rect x="1729" y="1463" width="8" height="8" fill="#d87c25"/><rect x="1745" y="1463" width="8" height="8" fill="#d87c25"/><rect x="1753" y="1463" width="8" height="8" fill="#d87c25"/><rect x="1721" y="1479" width="8" height="8" fill="#d87c25"/><rect x="1753" y="1479" width="8" height="8" fill="#d87c25"/><rect x="1737" y="1487" width="8" height="8" fill="#d87c25"/><rect x="2053" y="1452" width="50" height="50" fill="#f0f0f0"/><rect x="2057" y="1456" width="8" height="8" fill="#e80034"/><rect x="2073" y="1456" width="8" height="8" fill="#e80034"/><rect x="2089" y="1456" width="8" height="8" fill="#e80034"/><rect x="2073" y="1464" width="8" height="8" fill="#e80034"/><rect x="2057" y="1472" width="8" height="8" fill="#e80034"/><rect x="2065" y="1472" width="8" height="8" fill="#e80034"/><rect x="2073" y="1472" width="8" height="8" fill="#e80034"/><rect x="2081" y="1472" width="8" height="8" fill="#e80034"/><rect x="2089" y="1472" width="8" height="8" fill="#e80034"/><rect x="2073" y="1480" width="8" height="8" fill="#e80034"/><rect x="2057" y="1488" width="8" height="8" fill="#e80034"/><rect x="2065" y="1488" width="8" height="8" fill="#e80034"/><rect x="2073" y="1488" width="8" height="8" fill="#e80034"/><rect x="2081" y="1488" width="8" height="8" fill="#e80034"/><rect x="2089" y="1488" width="8" height="8" fill="#e80034"/><rect x="1717" y="1599" width="50" height="50" fill="#f0f0f0"/><rect x="1721" y="1603" width="8" height="8" fill="#00dca8"/><rect x="1753" y="1603" width="8" height="8" fill="#00dca8"/><rect x="1737" y="1611" width="8" height="8" fill="#00dca8"/><rect x="1729" y="1619" width="8" height="8" fill="#00dca8"/><rect x="1745" y="1619" width="8" height="8" fill="#00dca8"/><rect x="1721" y="1627" width="8" height="8" fill="#00dca8"/><rect x="1737" y="1627" width="8" height="8" fill="#00dca8"/><rect x="1753" y="1627" width="8" height="8" fill="#00dca8"/><rect x="1729" y="1635" width="8" height="8" fill="#00dca8"/><rect x="1745" y="1635" width="8" height="8" fill="#00dca8"/><rect x="2053" y="1600" width="50" height="50" fill="#f0f0f0"/><rect x="2073" y="1620" width="8" height="8" fill="#0091dc"/><rect x="2057" y="1628" width="8" height="8" fill="#0091dc"/><rect x="2065" y="1628" width="8" height="8" fill="#0091dc"/><rect x="2073" y="1628" width="8" height="8" fill="#0091dc"/><rect x="2081" y="1628" width="8" height="8" fill="#0091dc"/><rect x="2089" y="1628" width="8" height="8" fill="#0091dc"/><rect x="2057" y="1636" width="8" height="8" fill="#0091dc"/><rect x="2065" y="1636" width="8" height="8" fill="#0091dc"/><rect x="2073" y="1636" width="8" height="8" fill="#0091dc"/><rect x="2081" y="1636" width="8" height="8" fill="#0091dc"/><rect x="2089" y="1636" width="8" height="8" fill="#0091dc"/><rect x="1713" y="1741" width="50" height="50" fill="#f0f0f0"/><rect x="1717" y="1753" width="8" height="8" fill="#d82462"/><rect x="1725" y="1753" width="8" height="8" fill="#d82462"/><rect x="1733" y="1753" width="8" height="8" fill="#d82462"/><rect x="1741" y="1753" width="8" height="8" fill="#d82462"/><rect x="1749" y="1753" width="8" height="8" fill="#d82462"/><rect x="1717" y="1761" width="8" height="8" fill="#d82462"/><rect x="1733" y="1761" width="8" height="8" fill="#d82462"/><rect x="1749" y="1761" width="8" height="8" fill="#d82462"/><rect x="1717" y="1777" width="8" height="8" fill="#d82462"/><rect x="1733" y="1777" width="8" height="8" fill="#d82462"/><rect x="1749" y="1777" width="8" height="8" fill="#d82462"/><rect x="2053" y="1746" width="50" height="50" fill="#f0f0f0"/><rect x="2073" y="1774" width="8" height="8" fill="#0091dc"/><rect x="2057" y="1782" width="8" height="8" fill="#0091dc"/><rect x="2065" y="1782" width="8" height="8" fill="#0091dc"/><rect x="2073" y="1782" width="8" height="8" fill="#0091dc"/><rect x="2081" y="1782" width="8" height="8" fill="#0091dc"/><rect x="2089" y="1782" width="8" height="8" fill="#0091dc"/><rect x="2057" y="1790" width="8" height="8" fill="#0091dc"/><rect x="2065" y="1790" width="8" height="8" fill="#0091dc"/><rect x="2073" y="1790" width="8" height="8" fill="#0091dc"/><rect x="2081" y="1790" width="8" height="8" fill="#0091dc"/><rect x="2089" y="1790" width="8" height="8" fill="#0091dc"/></svg>
</body></html>
